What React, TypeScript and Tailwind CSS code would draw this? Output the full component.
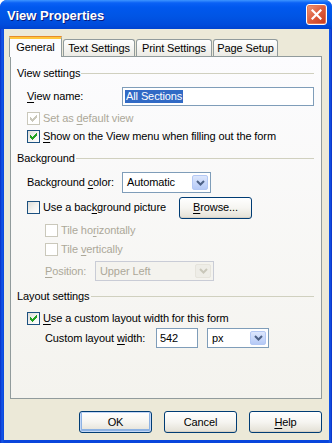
import React from "react";

const CHECK = [
  "......X",
  ".....XX",
  "X...XXX",
  "XX.XXX.",
  "XXXXX..",
  ".XXX...",
  "..X....",
];

function CheckMark({ color }: { color: string }) {
  const rects: React.ReactNode[] = [];
  CHECK.forEach((row, y) =>
    row.split("").forEach((c, x) => {
      if (c === "X") rects.push(<rect key={`${x}-${y}`} x={x} y={y} width={1} height={1} fill={color} />);
    })
  );
  return (
    <svg width="7" height="7" viewBox="0 0 7 7" shapeRendering="crispEdges">
      {rects}
    </svg>
  );
}

function Box({ checked, disabled }: { checked?: boolean; disabled?: boolean }) {
  return (
    <span
      className={
        disabled
          ? "w-[13px] h-[13px] shrink-0 border border-[#CAC8BB] bg-white flex items-center justify-center"
          : "w-[13px] h-[13px] shrink-0 border border-[#1C5180] bg-gradient-to-br from-[#DCDCD7] via-[#F2F2EF] to-white flex items-center justify-center"
      }
    >
      {checked && <CheckMark color={disabled ? "#CAC8BB" : "#21A121"} />}
    </span>
  );
}

function U({ children }: { children: React.ReactNode }) {
  return <span className="underline decoration-1 underline-offset-[2px]">{children}</span>;
}

function Chevron({ color }: { color: string }) {
  return (
    <svg width="9" height="6" viewBox="0 0 9 6">
      <path d="M1 1 L4.5 4.5 L8 1" fill="none" stroke={color} strokeWidth="2" />
    </svg>
  );
}

function Select({ value, w, h, disabled }: { value: string; w: string; h: string; disabled?: boolean }) {
  return (
    <div
      className={`${w} ${h} shrink-0 border flex items-stretch p-[1px] ${
        disabled ? "border-[#C9CCD6] bg-[#F4F3EE] text-[#ACA899]" : "border-[#7F9DB9] bg-white text-black"
      }`}
    >
      <span className="flex-1 flex items-center pl-[3px]">{value}</span>
      <span
        className={`w-[16px] my-[1px] mr-[1px] rounded-[2px] border flex items-center justify-center ${
          disabled
            ? "border-[#E6E4DC] bg-[#EEEDE7]"
            : "border-[#B4C8F4] bg-gradient-to-b from-[#DDE7FD] to-[#B6CAF6]"
        }`}
      >
        <Chevron color={disabled ? "#C9C7BA" : "#4D6185"} />
      </span>
    </div>
  );
}

function XPButton({ children, w, def }: { children: React.ReactNode; w: string; def?: boolean }) {
  return (
    <div
      className={`${w} h-[22px] shrink-0 rounded-[3px] border border-[#003C74] bg-gradient-to-b from-white via-[#F6F5F1] to-[#E3E0D5] flex items-center justify-center ${
        def ? "shadow-[inset_0_0_0_1px_#C3D7F7,inset_0_-1px_0_2px_#8DB2E3]" : "shadow-[inset_0_-1px_0_0_#D6D0C5]"
      }`}
    >
      {children}
    </div>
  );
}

function GroupHeader({ children }: { children: React.ReactNode }) {
  return (
    <div className="h-[14px] flex items-center">
      <span className="pr-[1px]">{children}</span>
      <span className="flex-1 h-px bg-[#D0D0BF]" />
    </div>
  );
}

function Tab({ children, w, selected }: { children: React.ReactNode; w: string; selected?: boolean }) {
  if (selected) {
    return (
      <div
        className={`${w} h-[21px] -mb-px relative z-10 border-x border-[#919B9C] bg-[#FCFCFE] rounded-t-[3px] flex flex-col`}
      >
        <div className="h-[1px] bg-[#E68B2C] rounded-t-[3px] -mx-px" />
        <div className="h-[2px] bg-[#FFC73C]" />
        <div className="flex-1 flex items-center justify-center pb-[2px]">{children}</div>
      </div>
    );
  }
  return (
    <div
      className={`${w} h-[17px] border-x border-t border-[#919B9C] rounded-t-[3px] bg-gradient-to-b from-white to-[#ECEBE5] flex items-center justify-center`}
    >
      {children}
    </div>
  );
}

function CloseBtn() {
  return (
    <div className="w-[21px] h-[21px] rounded-[3px] border border-white bg-gradient-to-br from-[#EC9B7C] via-[#DD5C3C] to-[#C4371B] flex items-center justify-center shadow-[inset_0_0_0_1px_#E67350]">
      <svg width="11" height="11" viewBox="0 0 11 11">
        <path d="M1.5 1.5 L9.5 9.5 M9.5 1.5 L1.5 9.5" stroke="white" strokeWidth="2.2" strokeLinecap="square" />
      </svg>
    </div>
  );
}

export default function App() {
  return (
    <div className="w-[332px] h-[443px] flex flex-col rounded-t-[7px] overflow-hidden bg-[linear-gradient(to_right,#0A2FC4,#1457E8_2px,#0A46DC_4px,#0846DC_328px,#1457E8_330px,#0A2FC4)] font-['Liberation_Sans',Tahoma,sans-serif] text-[11px] tracking-[-0.1px] leading-none text-black select-none">
      {/* title bar */}
      <div className="h-[29px] shrink-0 flex items-center justify-between pl-[7px] pr-[5px] bg-[linear-gradient(to_bottom,#3D95FF_0%,#0A61F5_10%,#0058EE_25%,#0055E5_55%,#004CDC_85%,#0043D0_100%)]">
        <span className="text-white font-bold text-[13px] tracking-normal [text-shadow:1px_1px_0_#0A1A7C] mt-[1px]">View Properties</span>
        <CloseBtn />
      </div>

      {/* client */}
      <div className="flex-1 ml-[4px] mr-[3px] mb-[3px] bg-[#ECE9D8] flex flex-col">
        {/* tabs */}
        <div className="h-[20px] mt-[7px] flex items-end pl-[5px] gap-[1px]">
          <Tab w="w-[53px]" selected>
            General
          </Tab>
          <Tab w="w-[72px]">Text Settings</Tab>
          <Tab w="w-[76px]">Print Settings</Tab>
          <Tab w="w-[65px]">Page Setup</Tab>
        </div>

        {/* panel */}
        <div className="ml-[6px] w-[312px] h-[343px] shrink-0 border border-[#919B9C] bg-gradient-to-b from-[#FCFCFE] to-[#F4F3EE] pl-[6px] pr-[7px] flex flex-col">
          <div className="mt-[9px]">
            <GroupHeader>View settings</GroupHeader>
          </div>

          <div className="mt-[7px] h-[19px] ml-[10px] flex items-center">
            <span className="w-[95px]">
              <U>V</U>iew name:
            </span>
            <div className="w-[192px] h-[19px] border border-[#7F9DB9] bg-white flex items-center pl-[2px]">
              <span className="bg-[#316AC5] text-white h-[13px] flex items-center px-[1px]">All Sections</span>
            </div>
          </div>

          <div className="mt-[5px] h-[14px] ml-[10px] flex items-center gap-[3px] text-[#ACA899]">
            <Box checked disabled />
            <span>
              Set as <U>d</U>efault view
            </span>
          </div>

          <div className="mt-[4px] h-[14px] ml-[10px] flex items-center gap-[3px]">
            <Box checked />
            <span>
              <U>S</U>how on the View menu when filling out the form
            </span>
          </div>

          <div className="mt-[8px]">
            <GroupHeader>Background</GroupHeader>
          </div>

          <div className="mt-[7px] h-[21px] ml-[10px] flex items-center">
            <span className="w-[95px]">
              Background <U>c</U>olor:
            </span>
            <Select value="Automatic" w="w-[89px]" h="h-[21px]" />
          </div>

          <div className="mt-[4px] h-[21px] ml-[10px] flex items-center">
            <div className="w-[152px] flex items-center gap-[3px]">
              <Box />
              <span>
                Use a bac<U>k</U>ground picture
              </span>
            </div>
            <XPButton w="w-[73px]">
              <span>
                <U>B</U>rowse...
              </span>
            </XPButton>
          </div>

          <div className="mt-[5px] h-[14px] ml-[28px] flex items-center gap-[3px] text-[#ACA899]">
            <Box disabled />
            <span>
              Tile ho<U>r</U>izontally
            </span>
          </div>

          <div className="mt-[5px] h-[14px] ml-[28px] flex items-center gap-[3px] text-[#ACA899]">
            <Box disabled />
            <span>
              Tile <U>v</U>ertically
            </span>
          </div>

          <div className="mt-[5px] h-[20px] ml-[28px] flex items-center">
            <span className="w-[50px] text-[#ACA899]">
              <U>P</U>osition:
            </span>
            <Select value="Upper Left" w="w-[119px]" h="h-[20px]" disabled />
          </div>

          <div className="mt-[8px]">
            <GroupHeader>Layout settings</GroupHeader>
          </div>

          <div className="mt-[8px] h-[14px] ml-[10px] flex items-center gap-[3px]">
            <Box checked />
            <span>
              <U>U</U>se a custom layout width for this form
            </span>
          </div>

          <div className="mt-[3px] h-[20px] ml-[28px] flex items-center">
            <span className="w-[111px]">
              Custom layout <U>w</U>idth:
            </span>
            <div className="w-[42px] h-[20px] border border-[#7F9DB9] bg-white flex items-center pl-[3px]">542</div>
            <div className="ml-[9px]">
              <Select value="px" w="w-[62px]" h="h-[20px]" />
            </div>
          </div>
        </div>

        {/* buttons */}
        <div className="mt-[12px] flex justify-end gap-[12px] pr-[7px]">
          <XPButton w="w-[73px]" def>
            OK
          </XPButton>
          <XPButton w="w-[73px]">Cancel</XPButton>
          <XPButton w="w-[73px]">
            <span>
              <U>H</U>elp
            </span>
          </XPButton>
        </div>
      </div>
    </div>
  );
}
